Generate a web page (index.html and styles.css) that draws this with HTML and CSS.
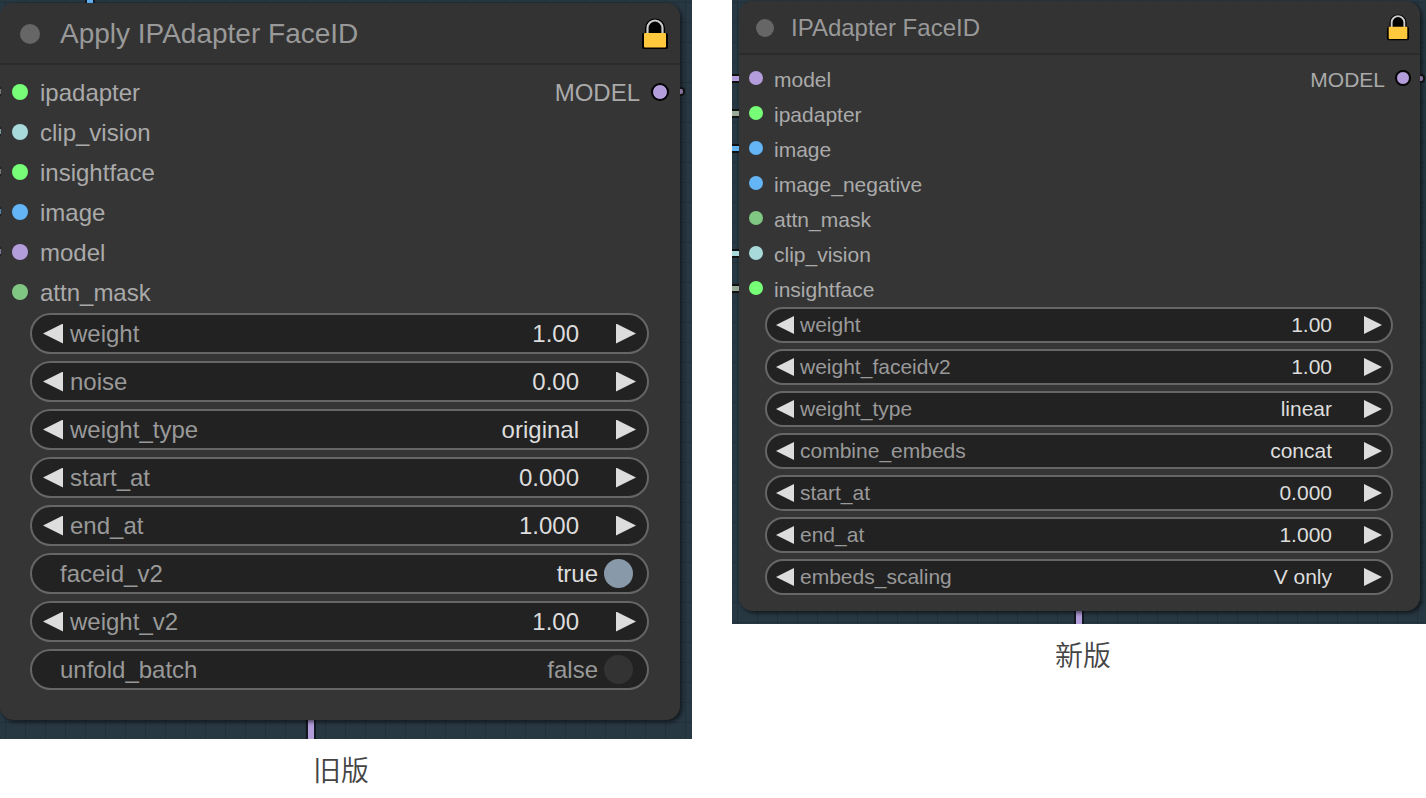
FILE: index.html
```html
<!DOCTYPE html>
<html lang="zh-CN">
<head>
    <meta charset="UTF-8">
    <title>IPAdapter FaceID</title>
    <link rel="stylesheet" href="styles.css">
</head>
<body>
    <div class="compare">
        <figure class="version old">
            <div class="canvas">
                <span class="link link-top"></span>
                <span class="link link-bottom"></span>
                <section class="node">
                    <header class="node-header">
                        <button type="button" class="collapse" aria-label="collapse"></button>
                        <h2>Apply IPAdapter FaceID</h2>
                        <svg class="lock" viewBox="0 0 26 32" aria-hidden="true">
                            <path d="M3 15V10a10 9.500 0 0 1 20 0v5h1a2 2 0 0 1 2 2v12a2 2 0 0 1-2 2H2a2 2 0 0 1-2-2V17a2 2 0 0 1 2-2z" fill="#000"/>
                            <path d="M5.500 16V10a7.500 7.500 0 0 1 15 0v6" fill="none" stroke="#ccc" stroke-width="2.200"/>
                            <rect x="2" y="15" width="22" height="14.500" rx="1" fill="#ffc83d"/>
                        </svg>
                    </header>
                    <div class="slots">
                        <ul class="inputs">
                            <li class="slot green linked">ipadapter</li>
                            <li class="slot teal linked">clip_vision</li>
                            <li class="slot green linked">insightface</li>
                            <li class="slot blue linked">image</li>
                            <li class="slot purple linked">model</li>
                            <li class="slot mask">attn_mask</li>
                        </ul>
                        <ul class="outputs">
                            <li class="slot purple">MODEL</li>
                        </ul>
                    </div>
                    <form class="widgets">
                        <div class="widget">
                            <button type="button" class="arrow prev" aria-label="decrease"></button>
                            <label for="old-weight">weight</label>
                            <input type="text" id="old-weight" value="1.00">
                            <button type="button" class="arrow next" aria-label="increase"></button>
                        </div>
                        <div class="widget">
                            <button type="button" class="arrow prev" aria-label="decrease"></button>
                            <label for="old-noise">noise</label>
                            <input type="text" id="old-noise" value="0.00">
                            <button type="button" class="arrow next" aria-label="increase"></button>
                        </div>
                        <div class="widget">
                            <button type="button" class="arrow prev" aria-label="previous"></button>
                            <label for="old-type">weight_type</label>
                            <select id="old-type"><option>original</option></select>
                            <button type="button" class="arrow next" aria-label="next"></button>
                        </div>
                        <div class="widget">
                            <button type="button" class="arrow prev" aria-label="decrease"></button>
                            <label for="old-start">start_at</label>
                            <input type="text" id="old-start" value="0.000">
                            <button type="button" class="arrow next" aria-label="increase"></button>
                        </div>
                        <div class="widget">
                            <button type="button" class="arrow prev" aria-label="decrease"></button>
                            <label for="old-end">end_at</label>
                            <input type="text" id="old-end" value="1.000">
                            <button type="button" class="arrow next" aria-label="increase"></button>
                        </div>
                        <div class="widget toggle">
                            <label for="old-faceid">faceid_v2</label>
                            <span class="state on">true</span>
                            <input type="checkbox" id="old-faceid" checked>
                        </div>
                        <div class="widget">
                            <button type="button" class="arrow prev" aria-label="decrease"></button>
                            <label for="old-weight2">weight_v2</label>
                            <input type="text" id="old-weight2" value="1.00">
                            <button type="button" class="arrow next" aria-label="increase"></button>
                        </div>
                        <div class="widget toggle">
                            <label for="old-unfold">unfold_batch</label>
                            <span class="state">false</span>
                            <input type="checkbox" id="old-unfold">
                        </div>
                    </form>
                </section>
            </div>
            <figcaption>旧版</figcaption>
        </figure>

        <figure class="version new">
            <div class="canvas">
                <span class="link link-bottom"></span>
                <section class="node">
                    <header class="node-header">
                        <button type="button" class="collapse" aria-label="collapse"></button>
                        <h2>IPAdapter FaceID</h2>
                        <svg class="lock" viewBox="0 0 26 32" aria-hidden="true">
                            <path d="M3 15V10a10 9.500 0 0 1 20 0v5h1a2 2 0 0 1 2 2v12a2 2 0 0 1-2 2H2a2 2 0 0 1-2-2V17a2 2 0 0 1 2-2z" fill="#000"/>
                            <path d="M5.500 16V10a7.500 7.500 0 0 1 15 0v6" fill="none" stroke="#ccc" stroke-width="2.200"/>
                            <rect x="2" y="15" width="22" height="14.500" rx="1" fill="#ffc83d"/>
                        </svg>
                    </header>
                    <div class="slots">
                        <ul class="inputs">
                            <li class="slot purple linked">model</li>
                            <li class="slot green linked">ipadapter</li>
                            <li class="slot blue linked">image</li>
                            <li class="slot blue">image_negative</li>
                            <li class="slot mask">attn_mask</li>
                            <li class="slot teal linked">clip_vision</li>
                            <li class="slot green linked">insightface</li>
                        </ul>
                        <ul class="outputs">
                            <li class="slot purple">MODEL</li>
                        </ul>
                    </div>
                    <form class="widgets">
                        <div class="widget">
                            <button type="button" class="arrow prev" aria-label="decrease"></button>
                            <label for="new-weight">weight</label>
                            <input type="text" id="new-weight" value="1.00">
                            <button type="button" class="arrow next" aria-label="increase"></button>
                        </div>
                        <div class="widget">
                            <button type="button" class="arrow prev" aria-label="decrease"></button>
                            <label for="new-faceid">weight_faceidv2</label>
                            <input type="text" id="new-faceid" value="1.00">
                            <button type="button" class="arrow next" aria-label="increase"></button>
                        </div>
                        <div class="widget">
                            <button type="button" class="arrow prev" aria-label="previous"></button>
                            <label for="new-type">weight_type</label>
                            <select id="new-type"><option>linear</option></select>
                            <button type="button" class="arrow next" aria-label="next"></button>
                        </div>
                        <div class="widget">
                            <button type="button" class="arrow prev" aria-label="previous"></button>
                            <label for="new-combine">combine_embeds</label>
                            <select id="new-combine"><option>concat</option></select>
                            <button type="button" class="arrow next" aria-label="next"></button>
                        </div>
                        <div class="widget">
                            <button type="button" class="arrow prev" aria-label="decrease"></button>
                            <label for="new-start">start_at</label>
                            <input type="text" id="new-start" value="0.000">
                            <button type="button" class="arrow next" aria-label="increase"></button>
                        </div>
                        <div class="widget">
                            <button type="button" class="arrow prev" aria-label="decrease"></button>
                            <label for="new-end">end_at</label>
                            <input type="text" id="new-end" value="1.000">
                            <button type="button" class="arrow next" aria-label="increase"></button>
                        </div>
                        <div class="widget">
                            <button type="button" class="arrow prev" aria-label="previous"></button>
                            <label for="new-scaling">embeds_scaling</label>
                            <select id="new-scaling"><option>V only</option></select>
                            <button type="button" class="arrow next" aria-label="next"></button>
                        </div>
                    </form>
                </section>
            </div>
            <figcaption>新版</figcaption>
        </figure>
    </div>
</body>
</html>
```
FILE: styles.css
```css
*, *::before, *::after {
    box-sizing: border-box;
}

body {
    margin: 0;
    background: white;
    font-family: "Liberation Sans", Arial, sans-serif;
}

.compare {
    display: flex;
    align-items: flex-start;
    gap: 40px;
}

.version {
    min-width: 0;
    margin: 0;
}

/* node sizes, the old node is zoomed in more */
.old {
    flex: 692;
    --text: 24px;
    --title: 28px;
    --header: 62px;
    --title-dot: 20px;
    --title-pad: 20px;
    --row: 40px;
    --slots-top: 8px;
    --dot: 16px;
    --dot-pad: 12px;
    --dot-gap: 12px;
    --widget: 41px;
    --widget-gap: 7px;
    --side: 30px;
    --arrow: 20px;
    --arrow-pad: 11px;
    --arrow-gap: 7px;
    --value-gap: 37px;
    --lock: 26px;
    --lock-pad: 12px;
    --stub: 1px;
}

.new {
    flex: 694;
    --text: 21px;
    --title: 24px;
    --header: 54px;
    --title-dot: 18px;
    --title-pad: 17px;
    --row: 35px;
    --slots-top: 7px;
    --dot: 14px;
    --dot-pad: 10px;
    --dot-gap: 11px;
    --widget: 36px;
    --widget-gap: 6px;
    --side: 26px;
    --arrow: 18px;
    --arrow-pad: 9px;
    --arrow-gap: 6px;
    --value-gap: 32px;
    --lock: 22px;
    --lock-pad: 11px;
    --stub: 7px;
}

.canvas {
    position: relative;
    overflow: hidden;
    background-color: #283843;
    background-image:
        linear-gradient(to right, #22303a 1px, transparent 1px),
        linear-gradient(to bottom, #22303a 1px, transparent 1px);
    background-size: 20px 20px;
    background-position: 5px 2px;
}

.old .canvas {
    padding: 3px 12px 19px 0;
}

.new .canvas {
    padding: 1px 6px 13px 7px;
}

.node {
    position: relative;
    background: #353535;
    border-radius: 14px;
    box-shadow: 2px 2px 4px rgba(0, 0, 0, 0.6);
}

.old .node {
    padding-bottom: 30px;
}

.new .node {
    padding-bottom: 16px;
}

.node-header {
    display: flex;
    align-items: center;
    gap: var(--title-pad);
    height: var(--header);
    padding: 2px var(--lock-pad) 0 var(--title-pad);
    background: #333;
    border-bottom: 2px solid #2b2b2b;
    border-radius: 14px 14px 0 0;
}

.node-header h2 {
    flex: 1;
    margin: 0;
    color: #999;
    font-size: var(--title);
    font-weight: normal;
}

.collapse {
    width: var(--title-dot);
    height: var(--title-dot);
    padding: 0;
    border: none;
    border-radius: 50%;
    background: #666;
}

.lock {
    width: var(--lock);
}

/* slots */
.slots {
    display: flex;
    justify-content: space-between;
    padding-top: var(--slots-top);
}

.slots ul {
    margin: 0;
    padding: 0;
    list-style: none;
}

.slot {
    position: relative;
    display: flex;
    align-items: center;
    gap: var(--dot-gap);
    height: var(--row);
    padding: 0 var(--dot-pad);
    color: #aaa;
    font-size: var(--text);
}

.slot::before {
    content: "";
    width: var(--dot);
    height: var(--dot);
    margin-bottom: 3px;
    border-radius: 50%;
    background: var(--color);
}

.outputs .slot {
    flex-direction: row-reverse;
}

.outputs .slot::before {
    border: 1px solid #000;
    box-shadow: 0 0 0 1px #000;
}

.green { --color: #7f7; --wire: #9a9; }
.teal { --color: #a8dadc; --wire: #a8dadc; }
.blue { --color: #64b5f6; --wire: #64b5f6; }
.purple { --color: #b39ddb; --wire: #b39ddb; }
.mask { --color: #81c784; }

/* ends of the wires that show beside the node */
.linked::after,
.outputs .slot::after {
    content: "";
    position: absolute;
    top: calc(50% - 6px);
    right: 100%;
    width: var(--stub);
    height: 9px;
    background: var(--wire);
    border: solid #111;
    border-width: 2px 0;
}

.old .linked::after {
    right: auto;
    left: 0;
    opacity: 0.6;
}

.outputs .slot::after {
    right: auto;
    left: 100%;
    width: 5px;
    background: #85749f;
    border-width: 2px 2px 2px 0;
    border-radius: 0 4px 4px 0;
}

.link {
    position: absolute;
    width: 10px;
    border: solid #111820;
    border-width: 0 2px;
}

.link-top {
    top: 0;
    left: 85px;
    height: 3px;
    background: #64b5f6;
}

.link-bottom {
    bottom: 0;
    left: 50%;
    height: 20px;
    background: #b39ddb;
    transform: translateX(-50%);
}

.old .link-bottom {
    left: 45%;
}

/* widgets */
.widgets {
    display: flex;
    flex-direction: column;
    gap: var(--widget-gap);
    padding: 0 calc(var(--side) + 1px) 0 var(--side);
}

.widget {
    display: flex;
    align-items: center;
    height: var(--widget);
    padding: 0 var(--arrow-pad);
    background: #222;
    border: 2px solid #666;
    border-radius: 21px;
    color: #999;
    font-size: var(--text);
}

.widget label,
.state {
    line-height: 28px;
}

.widget input[type="text"],
.widget select {
    flex: 1;
    min-width: 0;
    height: 28px;
    margin: 0 var(--value-gap) 0 0;
    padding: 0;
    appearance: none;
    background: none;
    border: none;
    outline: none;
    color: #ddd;
    font-family: inherit;
    font-size: inherit;
    line-height: 28px;
    text-align: right;
    text-align-last: right;
}

.arrow {
    width: var(--arrow);
    height: var(--arrow);
    padding: 0;
    border: none;
    background: #ddd;
}

.prev {
    margin-right: var(--arrow-gap);
    clip-path: polygon(0 50%, 100% 0, 100% 100%);
}

.next {
    clip-path: polygon(0 0, 100% 50%, 0 100%);
}

.toggle {
    padding: 0 14px 0 28px;
}

.toggle label {
    flex: 1;
}

.state.on {
    color: #ddd;
}

.toggle input {
    width: 29px;
    height: 29px;
    margin: 0 0 0 6px;
    appearance: none;
    border-radius: 50%;
    background: #333;
}

.toggle input:checked {
    background: #89a;
}

figcaption {
    margin-top: 10px;
    color: #444;
    font-family: "Noto Sans CJK SC", sans-serif;
    font-size: 28px;
    font-weight: 350;
    line-height: 40px;
    text-align: center;
}

.old figcaption {
    padding-right: 10px;
}

.new figcaption {
    padding-left: 8px;
}
```
